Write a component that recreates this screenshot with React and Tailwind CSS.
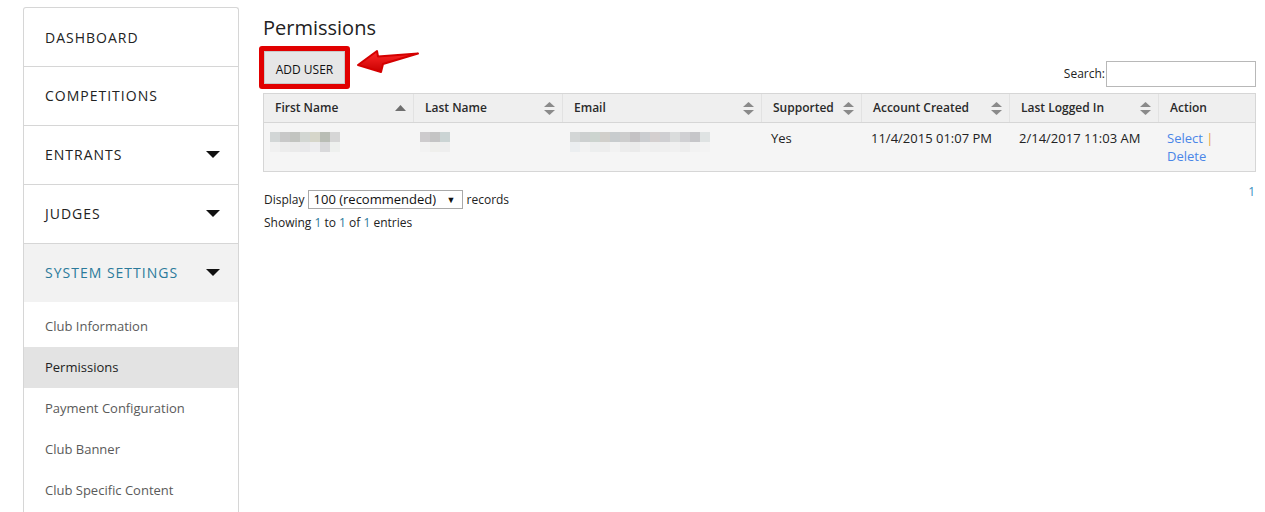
import React from "react";

const font = { fontFamily: '"Open Sans", "Liberation Sans", sans-serif' };

function Tri() {
  return (
    <svg width="14" height="8" viewBox="0 0 14 8" className="shrink-0">
      <polygon points="0,0 14,0 7,7" fill="#111" />
    </svg>
  );
}

function SortBoth() {
  return (
    <svg width="11" height="13" viewBox="0 0 11 13" className="shrink-0">
      <polygon points="5.5,0 11,5 0,5" fill="#8a8a8a" />
      <polygon points="0,8 11,8 5.5,13" fill="#8a8a8a" />
    </svg>
  );
}

function SortUp() {
  return (
    <svg width="11" height="6" viewBox="0 0 11 6" className="shrink-0">
      <polygon points="5.5,0 11,6 0,6" fill="#6f6f6f" />
    </svg>
  );
}

function Pixels({ top, bottom }) {
  return (
    <div className="flex flex-col">
      <div className="flex">
        {top.map((c, i) => (
          <div key={i} className="w-[10px] h-[10px]" style={{ background: c }} />
        ))}
      </div>
      <div className="flex">
        {bottom.map((c, i) => (
          <div key={i} className="w-[10px] h-[10px]" style={{ background: c }} />
        ))}
      </div>
    </div>
  );
}

const navTop = [
  { label: "DASHBOARD" },
  { label: "COMPETITIONS" },
  { label: "ENTRANTS", tri: true },
  { label: "JUDGES", tri: true },
];

const subItems = [
  "Club Information",
  "Permissions",
  "Payment Configuration",
  "Club Banner",
  "Club Specific Content",
];

const cols = [
  { label: "First Name", w: "w-[149px]", sort: "up" },
  { label: "Last Name", w: "w-[149px]", sort: "both" },
  { label: "Email", w: "w-[199px]", sort: "both" },
  { label: "Supported", w: "w-[100px]", sort: "both" },
  { label: "Account Created", w: "w-[148px]", sort: "both" },
  { label: "Last Logged In", w: "w-[149px]", sort: "both" },
  { label: "Action", w: "w-[97px]", sort: null },
];

export default function App() {
  return (
    <div className="w-[1265px] h-[512px] overflow-hidden bg-white flex pl-[23px] pt-[7px]" style={font}>
      {/* Sidebar */}
      <div className="w-[216px] shrink-0 border border-[#d6d6d6] border-b-0 rounded-t-[3px] bg-white self-start">
        {navTop.map((n, i) => (
          <div
            key={n.label}
            className={`flex items-center justify-between pl-[21px] pr-[18px] text-[14px] tracking-[1px] text-[#222] ${i > 0 ? "h-[59px] pb-[1px] border-t border-[#d6d6d6]" : "h-[58px]"}`}
          >
            <span>{n.label}</span>
            {n.tri && <Tri />}
          </div>
        ))}
        <div className="h-[59px] pb-[1px] flex items-center justify-between pl-[21px] pr-[18px] text-[14px] tracking-[1px] text-[#2b7a9b] bg-[#f2f2f2] border-t border-[#d6d6d6]">
          <span>SYSTEM SETTINGS</span>
          <Tri />
        </div>
        <div className="pt-[4px] pb-[20px]">
          {subItems.map((s) => (
            <div
              key={s}
              className={`h-[41px] flex items-center pl-[21px] text-[13px] ${s === "Permissions" ? "bg-[#e3e3e3] text-[#222]" : "text-[#5a5a5a]"}`}
            >
              {s}
            </div>
          ))}
        </div>
      </div>

      {/* Main */}
      <div className="ml-[25px] w-[992px] shrink-0 flex flex-col">
        <h1 className="text-[20px] leading-[28px] text-[#222] mt-[7px] -ml-[1px]">Permissions</h1>

        <div className="flex items-end justify-between mt-[4px]">
          <div className="relative flex items-center">
            <div className="-ml-[5px] border-[5px] border-[#e10000] rounded-[3px] bg-white">
              <div className="w-[81px] h-[33px] pt-[5px] bg-[#e6e6e6] border border-[#c9c9c9] flex items-center justify-center text-[12px] text-[#111]">
                ADD USER
              </div>
            </div>
            <svg width="66" height="30" viewBox="0 0 66 30" className="absolute left-[91px] top-[2px]">
              <defs>
                <linearGradient id="ag" x1="0" y1="0" x2="0" y2="1">
                  <stop offset="0" stopColor="#ff2a2a" />
                  <stop offset="1" stopColor="#c80000" />
                </linearGradient>
              </defs>
              <polygon
                points="3,17 22,3 23,8.5 63,5.5 28,16 26,24"
                fill="url(#ag)"
                stroke="#d40000"
                strokeWidth="2"
                strokeLinejoin="round"
              />
            </svg>
          </div>
          <div className="flex items-center mb-[2px]">
            <span className="text-[12px] text-[#222] mr-[1px]">Search:</span>
            <div className="w-[150px] h-[26px] border border-[#b8b8b8] bg-white" />
          </div>
        </div>

        {/* Table */}
        <div className="mt-[4px] -ml-[1px] w-[993px] border border-[#d6d6d6]">
          <div className="flex h-[29px] bg-[#efefef] border-b border-[#d6d6d6]">
            {cols.map((c, i) => (
              <div
                key={c.label}
                className={`${c.w} shrink-0 flex items-center justify-between pl-[11px] pr-[7px] text-[12px] font-semibold text-[#2a2a2a] ${i > 0 ? "border-l border-[#e2e2e2]" : ""}`}
              >
                <span>{c.label}</span>
                {c.sort === "up" && <SortUp />}
                {c.sort === "both" && <SortBoth />}
              </div>
            ))}
          </div>
          <div className="flex h-[48px] bg-[#f5f5f5] text-[13px] text-[#222]">
            <div className="w-[149px] shrink-0 pl-[6px] pt-[9px]">
              <Pixels
                top={["#d2d6d6", "#c8c8c8", "#c2c4c0", "#d2d6d2", "#d6d6ca", "#b9bdb5", "#d6d6d6"]}
                bottom={["#f0f0f0", "#ececec", "#eaeaea", "#e8e8ea", "#ededef", "#d9d9db", "#eef0ee"]}
              />
            </div>
            <div className="w-[149px] shrink-0 pl-[7px] pt-[9px]">
              <Pixels top={["#cdcbcd", "#c4c4c4", "#cbd4d4"]} bottom={["#f2f2f2", "#efefec", "#eeeeee"]} />
            </div>
            <div className="w-[199px] shrink-0 pl-[8px] pt-[9px]">
              <Pixels
                top={["#d3d6d6", "#cdd0d0", "#ccd4cf", "#d1cfcb", "#c8ccce", "#cdcdcd", "#c4c2c4", "#cbcdd0", "#d4cfcf", "#cfcfd2", "#dadcdc", "#d0d0d3", "#c6c6c9", "#dfe3e3"]}
                bottom={["#ebeef0", "#f2f2f2", "#eceeee", "#ededed", "#f2f2f2", "#ececec", "#eaeaea", "#f0f0f0", "#eeeeee", "#efefef", "#f0f0f0", "#ededed", "#f2f2f2", "#f3f3f3"]}
              />
            </div>
            <div className="w-[100px] shrink-0 pl-[10px] pt-[6px]">Yes</div>
            <div className="w-[148px] shrink-0 pl-[10px] pt-[6px]">11/4/2015 01:07 PM</div>
            <div className="w-[149px] shrink-0 pl-[10px] pt-[6px]">2/14/2017 11:03 AM</div>
            <div className="w-[97px] shrink-0 pl-[9px] pt-[6px] leading-[18px]">
              <div>
                <span className="text-[#4a86e8]">Select</span> <span className="text-[#e8a33a]">|</span>
              </div>
              <div className="text-[#4a86e8]">Delete</div>
            </div>
          </div>
        </div>

        <div className="flex justify-between mt-[10px]">
          <div className="flex flex-col">
            <div className="flex items-center text-[12px] text-[#222] mt-[8px]">
              <span>Display</span>
              <div className="ml-[3px] w-[155px] h-[19px] border border-[#a9a9a9] bg-white flex items-center justify-between pl-[5px] pr-[6px] text-[13px] text-[#111]">
                <span>100 (recommended)</span>
                <span className="text-[9px]">▼</span>
              </div>
              <span className="ml-[4px]">records</span>
            </div>
            <div className="text-[12px] text-[#222] mt-[5px]">
              Showing <span className="text-[#2b7a9b]">1</span> to <span className="text-[#2b7a9b]">1</span> of{" "}
              <span className="text-[#2b7a9b]">1</span> entries
            </div>
          </div>
          <div className="text-[12px] text-[#3a8fc0] pr-[1px] leading-[20px]">1</div>
        </div>
      </div>
    </div>
  );
}
